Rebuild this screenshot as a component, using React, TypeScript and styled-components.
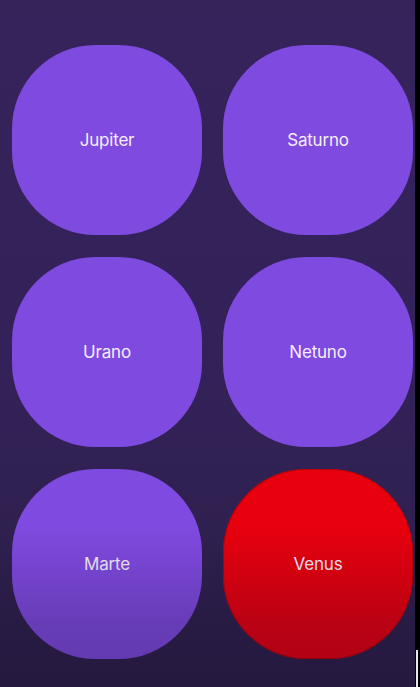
import React from "react";
import styled, { createGlobalStyle } from "styled-components";

const Global = createGlobalStyle`
  html, body { margin: 0; padding: 0; background: #000; }
  body { font-family: Inter, "Noto Sans", sans-serif; }
`;

const Screen = styled.div`
  display: flex;
  width: 420px;
  height: 687px;
  background: #000;
`;

const Stage = styled.main`
  position: relative;
  width: 415px;
  height: 687px;
  background: linear-gradient(180deg, #35235a 0%, #33225a 50%, #2c1f48 100%);
  box-sizing: border-box;
  padding: 45px 3px 0 12px;
  overflow: hidden;
`;

const Grid = styled.div`
  display: grid;
  grid-template-columns: 190px 190px;
  grid-auto-rows: 190px;
  column-gap: 21px;
  row-gap: 22px;
`;

const Planet = styled.button<{ $active?: boolean }>`
  border: none;
  margin: 0;
  padding: 0;
  width: 190px;
  height: 190px;
  border-radius: 44%;
  background: ${(p) => (p.$active ? "#e8000e" : "#7f4ae0")};
  box-shadow: ${(p) => (p.$active ? "inset 0 0 0 1px #b8000a" : "none")};
  color: #f6eefc;
  font-family: Inter, "Noto Sans", sans-serif;
  font-size: 17px;
  font-weight: 400;
  letter-spacing: -0.2px;
  display: flex;
  align-items: center;
  justify-content: center;
  cursor: pointer;
`;

const Shade = styled.div`
  position: absolute;
  left: 0;
  right: 0;
  bottom: 0;
  height: 160px;
  background: linear-gradient(180deg, rgba(20, 10, 40, 0) 0%, rgba(20, 10, 40, 0.22) 60%, rgba(20, 10, 40, 0.28) 100%);
  pointer-events: none;
`;

const Edge = styled.div`
  position: absolute;
  right: 2px;
  bottom: 0;
  width: 2px;
  height: 37px;
  background: #e8e8e8;
`;

const planets = ["Jupiter", "Saturno", "Urano", "Netuno", "Marte", "Venus"];

export default function App() {
  return (
    <>
      <Global />
      <Screen>
        <Stage>
          <Grid>
            {planets.map((p) => (
              <Planet key={p} $active={p === "Venus"}>
                {p}
              </Planet>
            ))}
          </Grid>
          <Shade />
        </Stage>
        <div style={{ position: "relative", flex: 1 }}>
          <Edge />
        </div>
      </Screen>
    </>
  );
}
